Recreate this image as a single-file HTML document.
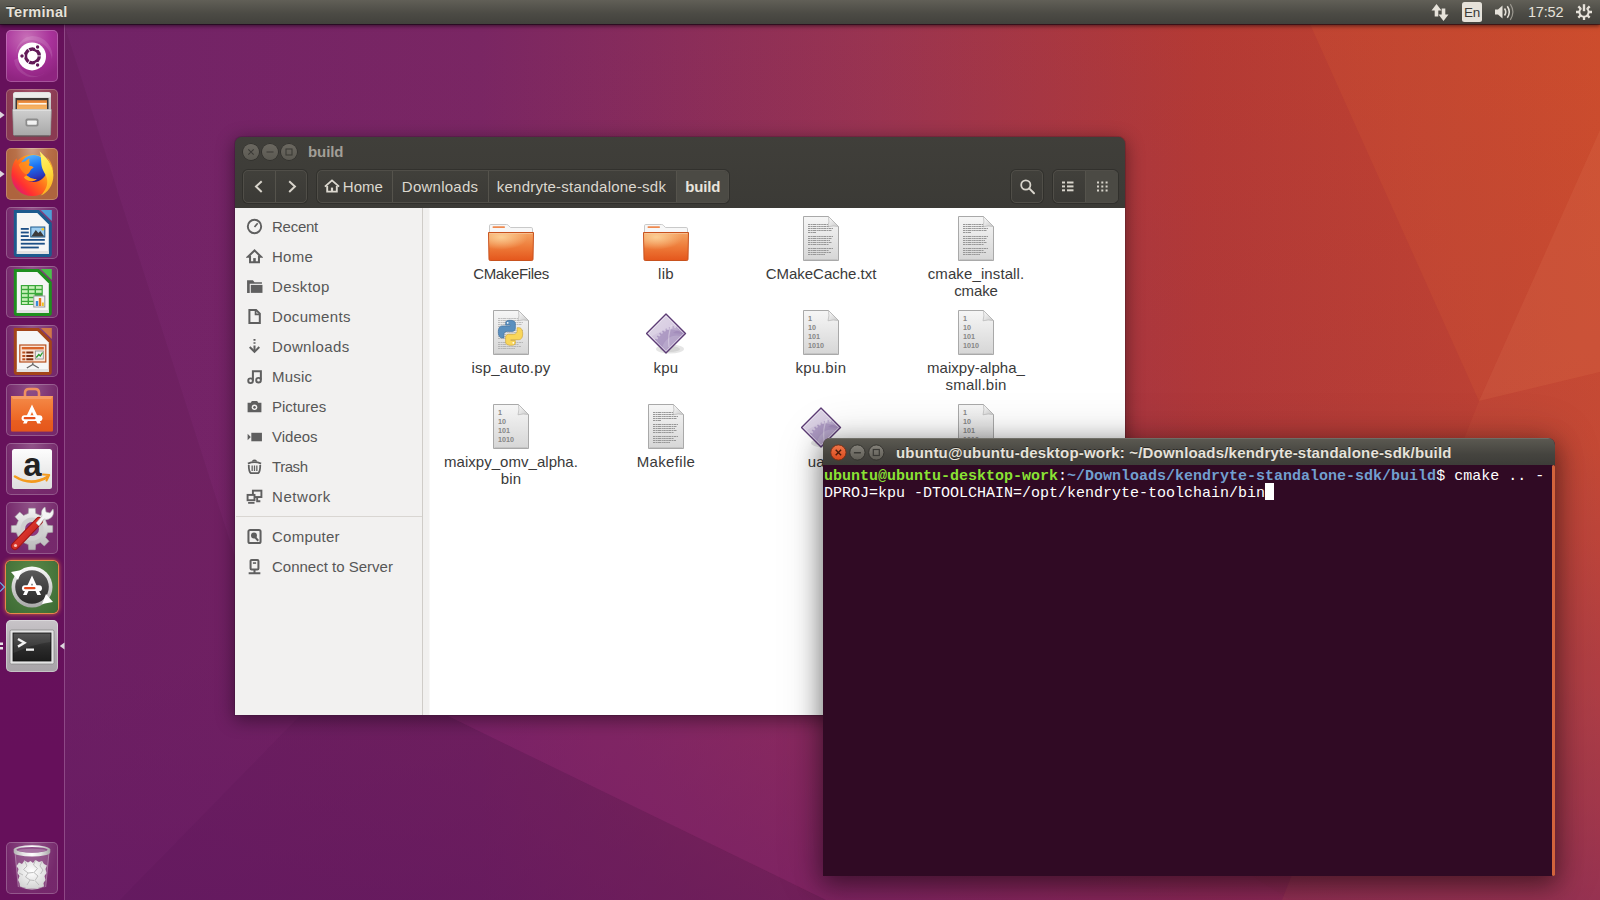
<!DOCTYPE html>
<html lang="en">
<head>
<meta charset="utf-8">
<title>Ubuntu Desktop</title>
<style>
*{box-sizing:border-box;margin:0;padding:0}
html,body{width:1600px;height:900px;overflow:hidden;background:#6e2266}
body{position:relative;font-family:"Liberation Sans","DejaVu Sans",sans-serif;color:#3c3c3c}
.abs{position:absolute}
#wall{position:absolute;left:0;top:0;width:1600px;height:900px}
/* top panel */
#panel{position:absolute;left:0;top:0;width:1600px;height:24px;background:linear-gradient(#615f57,#4c4b45 55%,#42413c);box-shadow:0 1px 0 rgba(20,5,18,.55),0 2px 4px rgba(0,0,0,.55);z-index:50}
#panel .title{position:absolute;left:6px;top:4px;font-weight:bold;font-size:14.5px;color:#e6e2da;letter-spacing:.28px;text-shadow:0 -1px 0 rgba(0,0,0,.4)}
#panel .clock{position:absolute;left:1528px;top:4px;font-size:14.5px;color:#e6e2da;letter-spacing:-.2px}
#panel .enbox{position:absolute;left:1462px;top:2px;width:20px;height:20px;border-radius:2.5px;background:#e6e2da;color:#3c3b37;font-size:13.5px;line-height:22px;text-align:center;letter-spacing:-.3px}
/* launcher */
#launcher{position:absolute;left:0;top:24px;width:65px;height:876px;background:rgba(100,14,88,.82);border-right:1px solid rgba(200,150,195,.42);z-index:40}
.tile{position:absolute;left:6px;width:52px;height:52px;border-radius:5px;overflow:hidden;box-shadow:inset 0 0 0 1px rgba(255,255,255,.22)}
/* nautilus */
#naut{position:absolute;left:235px;top:137px;width:890px;height:578px;border-radius:7px 7px 0 0;background:#3d3c38;box-shadow:0 4px 18px 1px rgba(0,0,0,.42),0 0 0 1px rgba(40,20,40,.2);z-index:10;overflow:hidden}
#naut .head{position:absolute;left:0;top:0;width:890px;height:71px;background:linear-gradient(#403f3a,#3b3a36)}
#naut .side{position:absolute;left:0;top:71px;width:188px;height:507px;background:#f2f1f0;border-right:1px solid #cfccc8}
#naut .content{position:absolute;left:188px;top:71px;width:702px;height:507px;background:linear-gradient(90deg,#f1f0ef 6px,#fff 7px)}

#naut .wb{position:absolute;top:6.5px;width:16px;height:16px;border-radius:50%;background:linear-gradient(#6b6860,#5b5952);box-shadow:0 0 0 .6px rgba(0,0,0,.35)}
#naut .ntitle{position:absolute;left:72px;top:6px;font-weight:bold;font-size:15px;color:#a29f97;letter-spacing:-.1px}
.hbtn{position:absolute;top:33px;height:33px;border:1px solid #504e48;border-radius:5px;background:linear-gradient(#41403b,#3b3a36);box-shadow:0 0 0 1px rgba(30,29,26,.35)}
.hbtn .div{position:absolute;top:0;width:1px;height:31px;background:#55534c}
.hbtn .act{position:absolute;top:0;height:31px;background:#4b4a44}
.pl{position:absolute;top:7px;margin-left:.8px;font-size:15px;color:#dcd8cf;white-space:nowrap}
.sb-item{position:absolute;left:36px;font-size:15px;color:#575757;white-space:nowrap;line-height:20px}
.sb-ic{position:absolute;left:9.5px;width:17px;height:17px;margin-top:-.5px}
.fl{position:absolute;width:150px;text-align:center;font-size:15px;line-height:17px;color:#3a3a3a;white-space:nowrap}
.fi{position:absolute}
#naut .head>*,#naut .side>*{margin-left:1px}
/* terminal */
#term{position:absolute;left:823px;top:438px;width:732px;height:438px;border-radius:7px 7px 0 0;background:#300a24;box-shadow:0 7px 24px 2px rgba(0,0,0,.45),0 2px 46px 6px rgba(0,0,0,.13);z-index:20;overflow:hidden}
#term .tbar{position:absolute;left:0;top:0;width:732px;height:27px;background:linear-gradient(#5c5a52,#45443f 60%,#3d3c38);box-shadow:inset 0 1px 0 rgba(255,255,255,.12)}
#term .ttl{position:absolute;left:73px;top:6px;font-weight:bold;font-size:15px;letter-spacing:.19px;color:#e6e2da;white-space:nowrap;text-shadow:0 -1px 0 rgba(0,0,0,.45)}
#term pre{position:absolute;left:1px;top:30px;font-family:"Liberation Mono","DejaVu Sans Mono",monospace;font-size:15px;line-height:17px;color:#fff;white-space:pre}
#term .g{color:#8ae234;font-weight:bold}
#term .b{color:#729fcf;font-weight:bold}
#term .cur{display:inline-block;width:9px;height:0;position:relative;vertical-align:baseline}
#term .cur::after{content:"";position:absolute;left:0;top:-14px;width:9px;height:17px;background:#fff}
#term .sb{position:absolute;right:0;top:27px;width:3px;height:411px;background:#d2633c;border-radius:1.5px}
</style>
</head>
<body>
<svg id="wall" viewBox="0 0 1600 900">
<defs>
<linearGradient id="wg" x1="0" y1="0" x2="1" y2="0">
<stop offset="0" stop-color="#6f2268"/>
<stop offset=".3" stop-color="#7a2663"/>
<stop offset=".55" stop-color="#9a3450"/>
<stop offset=".75" stop-color="#b43a34"/>
<stop offset="1" stop-color="#c8482c"/>
</linearGradient>
<linearGradient id="wv" x1="0" y1="0" x2="0" y2="1">
<stop offset="0" stop-color="#7a2070" stop-opacity="0"/>
<stop offset=".5" stop-color="#7a2070" stop-opacity=".1"/>
<stop offset="1" stop-color="#6a1a6a" stop-opacity=".6"/>
</linearGradient>
</defs>
<rect width="1600" height="900" fill="url(#wg)"/>
<rect width="1600" height="900" fill="url(#wv)"/>
<polygon points="64,24 236,560 236,716 300,716 120,900 64,900" fill="#1a0018" opacity=".06"/>
<polygon points="120,900 300,716 448,716 826,900" fill="#1a0018" opacity=".1"/>
<polygon points="448,716 1000,716 1290,900 826,900" fill="#a02868" opacity=".12"/>
<polygon points="1310,24 1600,24 1600,130 1479,401" fill="#ff8a3c" opacity=".09"/>
<polygon points="1600,130 1600,372 1479,401" fill="#ff9a5c" opacity=".16"/>
<polygon points="1479,401 1600,372 1600,900 1282,900" fill="#ff8a5c" opacity=".07"/>
</svg>

<svg width="0" height="0" style="position:absolute"><defs>
<linearGradient id="fo1" x1="0" y1="0" x2="0" y2="1"><stop offset="0" stop-color="#f4a463"/><stop offset=".5" stop-color="#ee7c3a"/><stop offset="1" stop-color="#e4561c"/></linearGradient>
<radialGradient id="fo2" cx=".28" cy=".2" r=".6"><stop offset="0" stop-color="#ffe0a8" stop-opacity=".75"/><stop offset="1" stop-color="#ffe0a8" stop-opacity="0"/></radialGradient>
<linearGradient id="dc1" x1="0" y1="0" x2="0" y2="1"><stop offset="0" stop-color="#f6f6f6"/><stop offset="1" stop-color="#d6d6d6"/></linearGradient>
<linearGradient id="dc2" x1="0" y1="0" x2="1" y2="1"><stop offset="0" stop-color="#ffffff"/><stop offset="1" stop-color="#c8c8c8"/></linearGradient>
<linearGradient id="ex1" x1="0" y1="0" x2="0" y2="1"><stop offset="0" stop-color="#d8cbe2"/><stop offset="1" stop-color="#a58cbc"/></linearGradient>
<g id="folder"><path d="M1.500 9 V1.800 Q1.500 .5 2.800 .5 H18.500 Q19.800 .5 20.600 1.500 L22.500 3.500 H43.200 Q44.500 3.500 44.500 4.800 V9Z" fill="#f7f7f7" stroke="#c9c9c9" stroke-width="1"/><rect x="4.500" y="2.300" width="12.500" height="1.700" rx=".8" fill="#ef8a50"/>
<path d="M.5 8.500 H45.500 L45 35.300 Q45 36.500 43.800 36.500 H2.200 Q1 36.500 1 35.300Z" fill="url(#fo1)" stroke="#c8521e" stroke-width="1"/><path d="M1 9 H45 L44.600 22 Q24 22 1.300 30Z" fill="url(#fo2)"/><path d="M1.500 9.500 H44.500" stroke="#f9c9a0" stroke-width="1" opacity=".7"/></g>
<g id="doc"><path d="M.5 .5 H25.500 L35.500 10.500 V44.500 H.5Z" fill="url(#dc1)" stroke="#a9a9a9" stroke-width="1"/><path d="M25.500 .5 Q26.500 6 25 10.800 Q30 9.300 35.500 10.500Z" fill="url(#dc2)" stroke="#b4b4b4" stroke-width=".7"/><path d="M1.500 43.500 H34.500" stroke="#c4c4c4" stroke-width="1"/></g>
<g id="doclines" stroke="#979797" stroke-width="1" stroke-dasharray="2.400 .5 1.700 .4 3.100 .5 1.300 .4"><path d="M5 8.5 H25 M5 10.5 H26 M5 12.5 H30 M5 14.5 H29 M5 16.5 H13 M5 20.5 H30 M5 22.5 H29 M5 24.5 H27 M5 26.5 H29 M5 28.5 H26 M5 32.5 H30 M5 34.5 H26 M5 36.5 H28 M5 38.5 H22"/></g>
<g id="exe"><defs><clipPath id="exc"><path d="M20 1.600 L38.900 20.500 L20 39.400 L1.100 20.500Z"/></clipPath><linearGradient id="ex3" x1="0" y1="0" x2="1" y2="1"><stop offset="0" stop-color="#ddd3e6"/><stop offset=".5" stop-color="#cfc2dc"/><stop offset="1" stop-color="#b9a7cc"/></linearGradient></defs>
<ellipse cx="24" cy="36" rx="14" ry="4.500" fill="#000" opacity=".10"/><ellipse cx="24" cy="36" rx="10" ry="3" fill="#000" opacity=".08"/>
<path d="M20 1 L39.500 20.500 L20 40 L.5 20.500Z" fill="url(#ex3)"/>
<g clip-path="url(#exc)"><path d="M30.0 15.1 L30.3 12.9 L31.7 12.9 L32.0 15.1 L33.5 15.2 L34.2 13.1 L35.5 13.3 L35.5 15.6 L37.0 15.9 L37.9 13.9 L39.3 14.3 L38.9 16.5 L40.3 17.1 L41.5 15.3 L42.8 15.9 L42.0 18.0 L43.4 18.8 L44.9 17.2 L46.0 18.0 L45.0 20.0 L46.1 21.0 L47.9 19.6 L48.9 20.6 L47.5 22.4 L48.5 23.5 L50.5 22.5 L51.3 23.6 L49.7 25.1 L50.5 26.5 L52.6 25.7 L53.2 27.0 L51.4 28.2 L52.0 29.6 L54.2 29.2 L54.6 30.6 L52.6 31.5 L52.9 33.0 L55.2 33.0 L55.4 34.3 L53.3 35.0 L53.4 36.5 L55.6 36.8 L55.6 38.2 L53.4 38.5 L53.3 40.0 L55.4 40.7 L55.2 42.0 L52.9 42.0 L52.6 43.5 L54.6 44.4 L54.2 45.8 L52.0 45.4 L51.4 46.8 L53.2 48.0 L52.6 49.3 L50.5 48.5 L49.7 49.9 L51.3 51.4 L50.5 52.5 L48.5 51.5 L47.5 52.6 L48.9 54.4 L47.9 55.4 L46.1 54.0 L45.0 55.0 L46.0 57.0 L44.9 57.8 L43.4 56.2 L42.0 57.0 L42.8 59.1 L41.5 59.7 L40.3 57.9 L38.9 58.5 L39.3 60.7 L37.9 61.1 L37.0 59.1 L35.5 59.4 L35.5 61.7 L34.2 61.9 L33.5 59.8 L32.0 59.9 L31.7 62.1 L30.3 62.1 L30.0 59.9 L28.5 59.8 L27.8 61.9 L26.5 61.7 L26.5 59.4 L25.0 59.1 L24.1 61.1 L22.7 60.7 L23.1 58.5 L21.7 57.9 L20.5 59.7 L19.2 59.1 L20.0 57.0 L18.6 56.2 L17.1 57.8 L16.0 57.0 L17.0 55.0 L15.9 54.0 L14.1 55.4 L13.1 54.4 L14.5 52.6 L13.5 51.5 L11.5 52.5 L10.7 51.4 L12.3 49.9 L11.5 48.5 L9.4 49.3 L8.8 48.0 L10.6 46.8 L10.0 45.4 L7.8 45.8 L7.4 44.4 L9.4 43.5 L9.1 42.0 L6.8 42.0 L6.6 40.7 L8.7 40.0 L8.6 38.5 L6.4 38.2 L6.4 36.8 L8.6 36.5 L8.7 35.0 L6.6 34.3 L6.8 33.0 L9.1 33.0 L9.4 31.5 L7.4 30.6 L7.8 29.2 L10.0 29.6 L10.6 28.2 L8.8 27.0 L9.4 25.7 L11.5 26.5 L12.3 25.1 L10.7 23.6 L11.5 22.5 L13.5 23.5 L14.5 22.4 L13.1 20.6 L14.1 19.6 L15.9 21.0 L17.0 20.0 L16.0 18.0 L17.1 17.2 L18.6 18.8 L20.0 18.0 L19.2 15.9 L20.5 15.3 L21.7 17.1 L23.1 16.5 L22.7 14.3 L24.1 13.9 L25.0 15.9 L26.5 15.6 L26.5 13.3 L27.8 13.1 L28.5 15.2Z" fill="#9a83b4" opacity=".62"/><circle cx="31" cy="37.500" r="15" fill="#c4b5d4" opacity=".5"/>
<path d="M25.500 12 Q21.500 22 23 34" stroke="#e8e0ee" stroke-width="1.300" fill="none" opacity=".5"/>
<path d="M27 20 L38 21 L33 16Z" fill="#9a83b4" opacity=".55"/>
<path d="M20 2 L38 20 Q27 15 20 17 Q10 20 5 24 L2 20.500Z" fill="#fff" opacity=".18"/></g>
<path d="M20 2.700 L37.800 20.500 L20 38.300 L2.200 20.500Z" fill="none" stroke="#fff" stroke-opacity=".55" stroke-width="1"/>
<path d="M20 1 L39.500 20.500 L20 40 L.5 20.500Z" fill="none" stroke="#5c3b74" stroke-width="1.300" stroke-linejoin="round"/></g>
<g id="py"><path d="M12.500 .8 C8 .8 8.200 2.800 8.200 2.800 V5.600 H12.700 V6.400 H4.800 C4.800 6.400 .8 6 .8 12.300 C.8 18.600 4.300 18.400 4.300 18.400 H6.400 V15.400 C6.400 15.400 6.300 11.900 9.800 11.900 H14.600 C14.600 11.900 17.900 12 17.900 8.700 V4.200 C17.900 4.200 18.400 .8 12.500 .8Z" fill="#5a8fbe" stroke="#3a6a98" stroke-width=".6"/><circle cx="10.200" cy="3.300" r=".9" fill="#fff"/>
<path d="M13.500 25.800 C18 25.800 17.800 23.800 17.800 23.800 V21 H13.300 V20.200 H21.200 C21.200 20.200 25.200 20.600 25.200 14.300 C25.200 8 21.700 8.200 21.700 8.200 H19.600 V11.200 C19.600 11.200 19.700 14.700 16.200 14.700 H11.400 C11.400 14.700 8.100 14.600 8.100 17.900 V22.400 C8.100 22.400 7.600 25.800 13.500 25.800Z" fill="#f9d65a" stroke="#c9a030" stroke-width=".6"/><circle cx="15.800" cy="23.300" r=".9" fill="#fff"/></g>
</defs></svg>
<div id="panel"><span class="title">Terminal</span>
<svg class="abs" style="left:1428px;top:0" width="24" height="24" viewBox="0 0 24 24"><g fill="#e6e2da"><path d="M8.5 4 L13.5 10.5 H10.3 V16.5 H6.7 V10.5 H3.5 Z"/><path d="M15.5 21 L10.5 14.5 H13.7 V8.5 H17.3 V14.5 H20.5 Z"/></g></svg>
<span class="enbox">En</span>
<svg class="abs" style="left:1493px;top:0" width="24" height="24" viewBox="0 0 24 24"><path d="M2 9.5 H5 L9.5 5.5 V18.5 L5 14.5 H2 Z" fill="#e6e2da"/><path d="M11.5 8.5 Q14 12 11.5 15.5" stroke="#e6e2da" stroke-width="1.6" fill="none"/><path d="M14.3 6.3 Q18.3 12 14.3 17.7" stroke="#e6e2da" stroke-width="1.5" fill="none"/><path d="M17.3 4.2 Q22.5 12 17.3 19.8" stroke="#9a978f" stroke-width="1.2" fill="none"/></svg>
<span class="clock">17:52</span>
<svg class="abs" style="left:1574px;top:2px" width="20" height="20" viewBox="0 0 20 20"><g fill="none" stroke="#e6e2da"><path d="M12.57 6.19 A4.6 4.6 0 1 1 7.43 6.19" stroke-width="1.9"/><path d="M13.54 6.46 L15.66 4.34 M15.00 10.00 L18.00 10.00 M13.54 13.54 L15.66 15.66 M10.00 15.00 L10.00 18.00 M6.46 13.54 L4.34 15.66 M5.00 10.00 L2.00 10.00 M6.46 6.46 L4.34 4.34 " stroke-width="2.3"/><path d="M10 2.200 V9.200" stroke-width="2.400"/></g></svg>
</div>
<div id="launcher">
<div class="tile" style="top:6px;background:radial-gradient(circle at 40% 15%,#c870b8,#a8329a 45%,#8f2480 80%);"><svg width="52" height="52" viewBox="0 0 52 52"><path d="M26 6 A20 20 0 0 1 46 30 A22 22 0 0 0 26 10 A16 16 0 0 0 10 24 A18 18 0 0 1 26 6Z" fill="#fff" opacity=".12"/>
<path d="M8 30 A19 19 0 0 0 40 42 A17 17 0 0 1 12 28Z" fill="#fff" opacity=".10"/>
<circle cx="26" cy="26.4" r="14" fill="#fff"/>
<circle cx="26.4" cy="25.9" r="6.9" fill="none" stroke="#621a58" stroke-width="3.3"/><g stroke="#fff" stroke-width=".9"><path d="M30.90 25.90 L35.90 25.90"/><path d="M24.15 29.80 L21.65 34.13"/><path d="M24.15 22.00 L21.65 17.67"/></g><g fill="#621a58" stroke="#fff" stroke-width="1.1"><circle cx="16.00" cy="25.90" r="2.3"/><circle cx="31.60" cy="16.89" r="2.3"/><circle cx="31.60" cy="34.91" r="2.3"/></g></svg></div>
<div class="tile" style="top:65px;background:radial-gradient(ellipse at 50% 0%,#a05068,#8a3a52 70%);"><svg width="52" height="52" viewBox="0 0 52 52"><defs><linearGradient id="fc1" x1="0" y1="0" x2="0" y2="1"><stop offset="0" stop-color="#d8d8d8"/><stop offset="1" stop-color="#9a9a9a"/></linearGradient><linearGradient id="fc2" x1="0" y1="0" x2="0" y2="1"><stop offset="0" stop-color="#cfcfcf"/><stop offset="1" stop-color="#a8a8a8"/></linearGradient></defs>
<path d="M7 5.500 Q7 3 9.500 3 H42.500 Q45 3 45 5.500 V46 H7Z" fill="url(#fc1)"/>
<rect x="7.500" y="3.500" width="37" height="5" rx="1.500" fill="#ececec"/>
<rect x="9.500" y="9" width="33" height="12" fill="#3c3836"/>
<rect x="11" y="11.500" width="30" height="9.500" fill="#f0a050"/><rect x="11" y="11.500" width="30" height="2" fill="#e8853a"/><rect x="12.500" y="14" width="28" height="1.600" fill="#fff6e8"/><rect x="11" y="16.500" width="30" height="4.500" fill="#f5b060"/>
<path d="M6.500 20.500 H45.500 L44.500 45.500 Q44.500 46.500 43.500 46.500 H8.500 Q7.500 46.500 7.500 45.500Z" fill="url(#fc2)" stroke="#8a8a8a" stroke-width=".6"/>
<path d="M7 21 H45" stroke="#eeeeee" stroke-width="1.200"/>
<rect x="19.500" y="29.500" width="13" height="8" rx="1.800" fill="#8c8c8c"/><rect x="21.200" y="31.500" width="9.600" height="4.200" rx=".8" fill="#f2f2f2"/>
<rect x="8.500" y="46.300" width="35" height="1.700" fill="#5a5a5a" opacity=".6"/></svg></div>
<div class="tile" style="top:124px;background:radial-gradient(ellipse at 50% -5%,#d0a48c,#b87048 45%,#ae643e 75%);"><svg width="52" height="52" viewBox="0 0 52 52"><defs><linearGradient id="ffo" gradientUnits="userSpaceOnUse" x1="9.5" y1="44" x2="42.8" y2="12.7"><stop offset="0" stop-color="#d8187e"/><stop offset=".22" stop-color="#ff2f32"/><stop offset=".5" stop-color="#ff6a1c"/><stop offset=".75" stop-color="#ffa81e"/><stop offset="1" stop-color="#ffd83a"/></linearGradient>
<linearGradient id="ffb" x1=".3" y1="0" x2=".6" y2="1"><stop offset="0" stop-color="#58b6ff"/><stop offset=".45" stop-color="#1a72f2"/><stop offset=".8" stop-color="#2a3cc0"/><stop offset="1" stop-color="#2e1a88"/></linearGradient>
<linearGradient id="ffh" x1="0" y1=".2" x2="1" y2=".8"><stop offset="0" stop-color="#ff4a2a"/><stop offset=".6" stop-color="#ff8a1c"/><stop offset="1" stop-color="#ffa41e"/></linearGradient>
<linearGradient id="fft" x1=".4" y1="0" x2=".6" y2="1"><stop offset="0" stop-color="#fff36a"/><stop offset=".45" stop-color="#ffe040"/><stop offset="1" stop-color="#ffa81c"/></linearGradient></defs>
<circle cx="26.200" cy="27.300" r="20.800" fill="url(#ffo)"/>
<circle cx="27.500" cy="20.500" r="13.600" fill="url(#ffb)"/>
<path d="M10.400 10.200 L12.600 16.400 C14.500 14.800 17 13.800 19.500 13.600 C20.500 12.200 22 11 23.500 10.600 C23 12.200 23 13.600 23.600 14.800 C23 15.800 22.600 16.800 22.800 17.800 C24.800 17.500 26.600 18.300 27.600 19.800 C26 20.400 24.600 21.400 23.900 23.200 C23.300 24.800 22 26 20.500 26.600 C22 29.500 26 31.500 30.800 31.200 C27.500 34 22 34.500 18 32 C12 30 7 26 5.600 24 C6 18 7.500 13.500 10.400 10.200Z" fill="url(#ffo)"/><path d="M12.600 16.400 C14.500 14.800 17 13.800 19.500 13.600 C20.500 12.200 22 11 23.500 10.600 C23 12.200 23 13.600 23.600 14.800 C23 15.800 22.600 16.800 22.800 17.800 C24.800 17.500 26.600 18.300 27.600 19.800 C26 20.400 24.600 21.400 23.900 23.200 C23.300 24.800 22 26 20.500 26.600 C17 25 14 21 12.600 16.400Z" fill="#ff9a1e" opacity=".55"/>
<path d="M18 29.500 C20.500 33.500 27 34 30.800 31.200 C27.600 31 24.600 30.600 22.400 28.600 C20.800 27.300 19 27.600 18 29.500Z" fill="#ffa51e"/>
<path d="M33.600 3.200 C38.500 8.500 47.200 14.500 47.400 27 C47.500 37.500 41.500 45 34.500 47.600 C39.800 42.500 42.300 36.500 40.900 30.500 C39.800 25.500 36 22.500 35.400 16.500 C35 11.500 35.200 7.500 33.600 3.200Z" fill="url(#fft)"/>
<path d="M40.500 8.500 C44 12 47 17 47.400 24 C45.500 18 43 13.500 40.500 8.500Z" fill="#ffb02a" opacity=".8"/></svg></div>
<div class="tile" style="top:183px;background:radial-gradient(ellipse at 50% 0%,rgba(255,255,255,.28),rgba(255,255,255,.10) 70%);"><svg width="52" height="52" viewBox="0 0 52 52"><g transform="translate(.8 0)"><path d="M7 3 H32 L45 16 V47 Q45 50 42 50 H10 Q7 50 7 47Z" fill="#1d5a8e"/>
<path d="M34 3 H45 V14Z" fill="#4f9fd6"/>
<path d="M10 6 H30.5 L42 17.5 V47 H10Z" fill="#f6f6f6"/><path d="M10 44 H42 V47 H10Z" fill="#e2e2e2"/><g fill="#1d4f86"><rect x="14" y="21" width="8" height="1.8"/><rect x="14" y="24.6" width="8" height="1.8"/><rect x="14" y="28.2" width="8" height="1.8"/><rect x="14" y="32" width="24" height="1.8"/><rect x="14" y="35.8" width="24" height="1.8"/><rect x="14" y="39.6" width="18" height="1.8"/></g>
<rect x="24" y="20" width="14" height="10" fill="#9ccdf0" stroke="#1d5a8e" stroke-width="1"/><path d="M24.5 29.5 L29 23 L31.5 26 L33.5 24 L37.5 29.5Z" fill="#3c3c3c"/><circle cx="36" cy="22.3" r="1.3" fill="#f6c820"/></g></svg></div>
<div class="tile" style="top:242px;background:radial-gradient(ellipse at 50% 0%,rgba(255,255,255,.28),rgba(255,255,255,.10) 70%);"><svg width="52" height="52" viewBox="0 0 52 52"><g transform="translate(.8 0)"><path d="M7 3 H32 L45 16 V47 Q45 50 42 50 H10 Q7 50 7 47Z" fill="#1f8f1f"/>
<path d="M34 3 H45 V14Z" fill="#4cc04c"/>
<path d="M10 6 H30.5 L42 17.5 V47 H10Z" fill="#f6f6f6"/><path d="M10 44 H42 V47 H10Z" fill="#e2e2e2"/><g fill="#3aa83a"><rect x="14" y="19" width="22" height="20"/></g><g fill="#c8f0b8"><rect x="15.2" y="20.2" width="5.6" height="2.6"/><rect x="22.2" y="20.2" width="5.6" height="2.6"/><rect x="29.2" y="20.2" width="5.6" height="2.6"/><rect x="15.2" y="24.2" width="5.6" height="2.6"/><rect x="22.2" y="24.2" width="5.6" height="2.6"/><rect x="29.2" y="24.2" width="5.6" height="2.6"/><rect x="15.2" y="28.2" width="5.6" height="2.6"/><rect x="22.2" y="28.2" width="5.6" height="2.6"/><rect x="15.2" y="32.2" width="5.6" height="2.6"/><rect x="22.2" y="32.2" width="5.6" height="2.6"/><rect x="15.2" y="36" width="5.6" height="2"/><rect x="22.2" y="36" width="5.6" height="2"/></g>
<rect x="27" y="30" width="11" height="11" fill="#f4f4f4" stroke="#9a9a9a" stroke-width="1"/><rect x="29" y="35" width="2.4" height="5" fill="#3a8ad8"/><rect x="32" y="32" width="2.4" height="8" fill="#e87820"/><rect x="35" y="36.5" width="2" height="3.5" fill="#f0c020"/></g></svg></div>
<div class="tile" style="top:301px;background:radial-gradient(ellipse at 50% 0%,rgba(255,255,255,.28),rgba(255,255,255,.10) 70%);"><svg width="52" height="52" viewBox="0 0 52 52"><g transform="translate(.8 0)"><path d="M7 3 H32 L45 16 V47 Q45 50 42 50 H10 Q7 50 7 47Z" fill="#a3451a"/>
<path d="M34 3 H45 V14Z" fill="#d07848"/>
<path d="M10 6 H30.5 L42 17.5 V47 H10Z" fill="#f6f6f6"/><path d="M10 44 H42 V47 H10Z" fill="#e2e2e2"/><rect x="13" y="20" width="26" height="17" fill="#fbe4d6" stroke="#b8501e" stroke-width="1.2"/><rect x="15" y="22" width="22" height="2.4" fill="#d8642a"/><g fill="#b8501e"><rect x="15.5" y="26.5" width="3" height="2"/><rect x="15.5" y="30" width="3" height="2"/><rect x="15.5" y="33.3" width="3" height="2"/></g><g fill="#7a2c10"><rect x="19.5" y="26.5" width="7" height="2"/><rect x="19.5" y="30" width="7" height="2"/><rect x="19.5" y="33.3" width="7" height="2"/></g><rect x="28.5" y="26" width="8" height="8" fill="#eee" stroke="#8a8a8a" stroke-width=".8"/><path d="M29.5 32.5 L32 29.5 L33.5 31 L35.8 27.5" stroke="#2a9a2a" stroke-width="1.3" fill="none"/><path d="M26 37.5 V40 M26 39.5 L20 43 M26 39.5 L32 43" stroke="#6a6a6a" stroke-width="1.4" fill="none"/></g></svg></div>
<div class="tile" style="top:360px;background:radial-gradient(ellipse at 50% 0%,rgba(255,255,255,.28),rgba(255,255,255,.10) 70%);"><svg width="52" height="52" viewBox="0 0 52 52"><defs><linearGradient id="sc1" x1="0" y1="0" x2="0" y2="1"><stop offset="0" stop-color="#f48a48"/><stop offset=".6" stop-color="#ee6a28"/><stop offset="1" stop-color="#e85a1c"/></linearGradient></defs>
<path d="M19 16 V9 Q19 5 23 5 H29 Q33 5 33 9 V16" fill="none" stroke="#f09060" stroke-width="2.6"/>
<path d="M5 12 H47 V46 Q47 47.5 45.5 47.5 H6.500 Q5 47.500 5 46Z" fill="url(#sc1)"/><path d="M5 12 H47 L45 15 H7Z" fill="#f8a878" opacity=".6"/><rect x="5" y="36" width="42" height="11.5" fill="#e0501a" opacity=".35"/>
<path d="M26 20.500 L35 39.600 H31.300 L26 28 L20.700 39.600 H17Z" fill="#fff"/><rect x="15.600" y="31.300" width="20.800" height="5.800" rx="2.900" fill="#fff"/><rect x="17.600" y="33.100" width="12" height="2.200" rx="1.100" fill="#e8501c"/></svg></div>
<div class="tile" style="top:419px;background:radial-gradient(ellipse at 50% 0%,rgba(255,255,255,.28),rgba(255,255,255,.10) 70%);"><svg width="52" height="52" viewBox="0 0 52 52"><defs><linearGradient id="am1" x1="0" y1="0" x2="0" y2="1"><stop offset="0" stop-color="#fdfdfd"/><stop offset="1" stop-color="#dedede"/></linearGradient></defs>
<rect x="6" y="6" width="40" height="40" rx="2.500" fill="url(#am1)"/>
<text x="26.500" y="33" text-anchor="middle" font-family="Liberation Sans,sans-serif" font-weight="bold" font-size="33" fill="#222">a</text>
<path d="M9 33.500 Q25 43.500 41.500 34" stroke="#f39a1e" stroke-width="2.600" fill="none" stroke-linecap="round"/><path d="M37 31.500 L43.200 32 L40.500 37.500" stroke="#f39a1e" stroke-width="2" fill="none" stroke-linejoin="round" stroke-linecap="round"/></svg></div>
<div class="tile" style="top:478px;background:radial-gradient(ellipse at 50% 0%,rgba(255,255,255,.28),rgba(255,255,255,.10) 70%);"><svg width="52" height="52" viewBox="0 0 52 52"><defs><linearGradient id="gr1" x1="0" y1="0" x2="0" y2="1"><stop offset="0" stop-color="#f2f2f2"/><stop offset="1" stop-color="#b8b8b8"/></linearGradient><linearGradient id="wr1" x1="0" y1="0" x2="1" y2="1"><stop offset="0" stop-color="#f04838"/><stop offset="1" stop-color="#b81818"/></linearGradient></defs>
<path d="M22.3 11.4 L22.7 6.3 L29.3 6.3 L29.7 11.4 L34.4 13.4 L38.3 10.0 L43.0 14.7 L39.6 18.6 L41.6 23.3 L46.7 23.7 L46.7 30.3 L41.6 30.7 L39.6 35.4 L43.0 39.3 L38.3 44.0 L34.4 40.6 L29.7 42.6 L29.3 47.7 L22.7 47.7 L22.3 42.6 L17.6 40.6 L13.7 44.0 L9.0 39.3 L12.4 35.4 L10.4 30.7 L5.3 30.3 L5.3 23.7 L10.4 23.3 L12.4 18.6 L9.0 14.7 L13.7 10.0 L17.6 13.4Z" fill="url(#gr1)" stroke="#a8a8a8" stroke-width=".6"/><circle cx="26" cy="27" r="11.500" fill="#cfcfcf"/><circle cx="26" cy="27" r="7" fill="#8c3a80"/>
<path d="M9 44 L33 19" stroke="#a01414" stroke-width="8" stroke-linecap="round"/><path d="M9 44 L33 19" stroke="url(#wr1)" stroke-width="6" stroke-linecap="round"/><circle cx="9.500" cy="43.500" r="1.600" fill="#f8c0b8"/>
<path d="M30 21 L36 14 Q34 8 39 5 L40 10 L44 11 L47 7 Q49 14 43 17 Q40 18 38 17 L33 24Z" fill="#f4f4f4" stroke="#b0b0b0" stroke-width=".6"/></svg></div>
<div class="tile" style="top:537px;background:radial-gradient(ellipse at 50% 30%,#5a8a48,#45733a 70%,#3c6a32);box-shadow:0 0 0 1px #e8884a,0 0 4px 1px rgba(240,130,60,.8);"><svg width="52" height="52" viewBox="0 0 52 52"><defs><linearGradient id="up1" x1="0" y1="0" x2="0" y2="1"><stop offset="0" stop-color="#5a5a5a"/><stop offset="1" stop-color="#2a2a2a"/></linearGradient><linearGradient id="up2" x1="0" y1="0" x2="0" y2="1"><stop offset="0" stop-color="#fafafa"/><stop offset="1" stop-color="#a8a8a8"/></linearGradient></defs>
<circle cx="26" cy="26" r="20.500" fill="url(#up2)"/><circle cx="26" cy="26" r="16.800" fill="url(#up1)"/>
<path d="M5 11 L16 9 L12 19Z" fill="#fff"/><path d="M47 41 L36 43 L40 33Z" fill="#fff"/>
<path d="M26 14.500 L35 34 H31.300 L26 22.200 L20.700 34 H17Z" fill="#fff"/><rect x="16" y="24.300" width="20" height="5.800" rx="2.900" fill="#fff"/><rect x="18" y="26.100" width="11.500" height="2.200" rx="1.100" fill="#e8481c"/></svg></div>
<div class="tile" style="top:596px;background:linear-gradient(#c8c4c8,#b0acb0 60%,#a8a4a8);box-shadow:inset 0 0 0 1px rgba(255,255,255,.35);"><svg width="52" height="52" viewBox="0 0 52 52"><defs><linearGradient id="tm1" x1="0" y1="0" x2="0" y2="1"><stop offset="0" stop-color="#4a4a4a"/><stop offset=".5" stop-color="#2c2c2c"/><stop offset="1" stop-color="#1c1c1c"/></linearGradient></defs>
<rect x="4" y="10" width="44" height="34" rx="1.500" fill="#e4e4e4" stroke="#8a8a8a" stroke-width=".8"/><rect x="7" y="13" width="38" height="28" fill="url(#tm1)" stroke="#111" stroke-width=".8"/>
<path d="M7.500 13.500 H44.500 V22 Q28 24 7.500 33Z" fill="#fff" opacity=".07"/>
<path d="M12 19 L18.500 22.800 L12 26.600" stroke="#f2f2f2" stroke-width="2.400" fill="none"/><rect x="20" y="28.500" width="8" height="2.300" fill="#f2f2f2"/></svg></div>
<div class="tile" style="top:818px;background:radial-gradient(ellipse at 50% 0%,rgba(255,255,255,.28),rgba(255,255,255,.10) 70%);"><svg width="52" height="52" viewBox="0 0 52 52"><defs><linearGradient id="tr1" x1="0" y1="0" x2="1" y2="0"><stop offset="0" stop-color="#b4b4b4"/><stop offset=".25" stop-color="#e4e4e4"/><stop offset=".5" stop-color="#ffffff"/><stop offset=".75" stop-color="#e0e0e0"/><stop offset="1" stop-color="#a8a8a8"/></linearGradient>
<radialGradient id="tr2" cx=".5" cy=".4" r=".6"><stop offset="0" stop-color="#ffffff"/><stop offset="1" stop-color="#d4d4d4"/></radialGradient></defs>
<path d="M8.500 10 L12 45 Q26 50 40 45 L43.500 10Z" fill="#fff" opacity=".13"/>
<path d="M9 10 L12.300 45 M43 10 L39.700 45" stroke="#fff" stroke-opacity=".35" stroke-width=".8" fill="none"/>
<path d="M10.500 24 L13 20.500 L16 22 L18.500 18.500 L22 20.500 L24.500 19 L27 21 L29.500 18 L33 20 L36 19 L38 22 L41 23.500 L39.500 27 L40.500 31 L38.500 34 L39.500 38 L37.500 41 L38 44.500 Q26 48.500 14 44.500 L13.500 41 L12 38 L13.500 34 L11.500 31 L12.500 27Z" fill="url(#tr2)"/>
<path d="M18.500 18.500 L21 24 L17.500 27.500 L22 31 L19.500 35 L24 38 L21 43 M29.500 18 L27.500 23 L31.500 26.500 L28 30.500 L32 34 L29 38.500 L33 43 M36 19 L34 24 L37 28 L34.500 32 M13 31 L17 33 M24 38 L28 38.500 M22 31 L27.500 30.500" stroke="#bdbdbd" stroke-width="1" fill="none"/>
<path d="M14 44.500 Q26 48.500 38 44.500 Q26 50.500 14 44.500Z" fill="#cfcfcf"/>
<path d="M7.700 7.500 V10.300 A18.300 4.300 0 0 0 44.300 10.300 V7.500Z" fill="url(#tr1)"/>
<ellipse cx="26" cy="7.500" rx="18.300" ry="4.300" fill="url(#tr1)"/><ellipse cx="26" cy="7.800" rx="15.600" ry="2.900" fill="#8e5089"/><ellipse cx="26" cy="8.600" rx="14" ry="1.800" fill="#b48ab0" opacity=".6"/></svg></div>
<svg class="abs" style="left:0;top:85px" width="6" height="12"><path d="M0 2.600 L4.600 6 L0 9.400Z" fill="#dcd6dc"/></svg>
<svg class="abs" style="left:0;top:144px" width="6" height="12"><path d="M0 2.600 L4.600 6 L0 9.400Z" fill="#dcd6dc"/></svg>
<svg class="abs" style="left:0;top:557px" width="6" height="12"><path d="M0 1.500 L4.500 6 L0 10.500" fill="none" stroke="#6ab0e8" stroke-width="1.200"/></svg>
<svg class="abs" style="left:0;top:614px" width="6" height="16"><rect x="0" y="4.500" width="3" height="2.500" fill="#e8e4e8"/><rect x="0" y="9" width="3" height="2.500" fill="#e8e4e8"/></svg>
<svg class="abs" style="left:59px;top:616px" width="6" height="12"><path d="M5.500 2.400 L.8 6 L5.500 9.600Z" fill="#dcd6dc"/></svg>
</div>

<div id="naut">
<div class="head">
<div class="wb" style="left:6.5px"><svg width="16" height="16"><path d="M5.300 5.300 L10.700 10.700 M10.700 5.300 L5.300 10.700" stroke="#3a3935" stroke-width="1.050"/></svg></div>
<div class="wb" style="left:25.500px"><svg width="16" height="16"><path d="M4.500 8 H11.500" stroke="#3a3935" stroke-width="1.050"/></svg></div>
<div class="wb" style="left:44.500px"><svg width="16" height="16"><rect x="5" y="5" width="6" height="6" fill="none" stroke="#3a3935" stroke-width="1.050"/></svg></div>
<div class="ntitle">build</div>
<div class="hbtn" style="left:7px;width:64px"><div class="div" style="left:31px"></div>
<svg class="abs" style="left:0;top:0" width="63" height="31"><path d="M17.700 10.300 L12 15.600 L17.700 20.900" stroke="#d8d4cb" stroke-width="2" fill="none"/><path d="M45.200 10.300 L50.900 15.600 L45.200 20.900" stroke="#d8d4cb" stroke-width="2" fill="none"/></svg></div>
<div class="hbtn" style="left:81px;width:412px">
<div class="act" style="left:359px;width:51px;border-radius:0 4px 4px 0"></div>
<div class="div" style="left:74px"></div><div class="div" style="left:170px"></div><div class="div" style="left:358px"></div>
<svg class="abs" style="left:6px;top:7.500px" width="16" height="14" viewBox="0 0 16 14"><g fill="none" stroke="#dcd8cf" stroke-width="1.900"><path d="M.9 7.600 L8 1.400 L15.100 7.600"/><path d="M3.200 7 V12.600 H12.800 V7"/></g><rect x="6.900" y="8.600" width="2.200" height="4" fill="#dcd8cf"/></svg>
<span class="pl" style="left:24px">Home</span>
<span class="pl" style="left:83px;letter-spacing:.25px">Downloads</span>
<span class="pl" style="left:178px;letter-spacing:.22px">kendryte-standalone-sdk</span>
<span class="pl" style="left:366.5px;font-weight:bold;color:#e8e4dc;letter-spacing:-.2px">build</span>
</div>
<div class="hbtn" style="left:775px;width:32px"><svg class="abs" style="left:0;top:0" width="31" height="31"><circle cx="13.800" cy="14" r="4.600" fill="none" stroke="#d8d4cb" stroke-width="1.800"/><path d="M17.200 17.400 L22 22.200" stroke="#d8d4cb" stroke-width="2" stroke-linecap="round"/></svg></div>
<div class="hbtn" style="left:817px;width:65px"><div class="act" style="left:32px;width:32px;border-radius:0 4px 4px 0"></div><div class="div" style="left:31px"></div>
<svg class="abs" style="left:0;top:0" width="64" height="31"><g fill="#d8d4cb"><rect x="8" y="10.500" width="3" height="2"/><rect x="13" y="10.500" width="6.500" height="2"/><rect x="8" y="14.400" width="3" height="2"/><rect x="13" y="14.400" width="6.500" height="2"/><rect x="8" y="18.300" width="3" height="2"/><rect x="13" y="18.300" width="6.500" height="2"/>
<rect x="43" y="10.500" width="2" height="2"/><rect x="47.300" y="10.500" width="2" height="2"/><rect x="51.600" y="10.500" width="2" height="2"/><rect x="43" y="14.500" width="2" height="2"/><rect x="47.300" y="14.500" width="2" height="2"/><rect x="51.600" y="14.500" width="2" height="2"/><rect x="43" y="18.500" width="2" height="2"/><rect x="47.300" y="18.500" width="2" height="2"/><rect x="51.600" y="18.500" width="2" height="2"/></g></svg></div>
</div>
<div class="side">
<svg class="sb-ic" style="top:10px" viewBox="0 0 16 16"><circle cx="8" cy="8" r="6.300" fill="none" stroke="#5f5f5f" stroke-width="1.800"/><path d="M8 8.500 L11 5" stroke="#5f5f5f" stroke-width="1.600" fill="none"/></svg><span class="sb-item" style="top:9px;letter-spacing:-0.25px">Recent</span>
<svg class="sb-ic" style="top:40px" viewBox="0 0 16 16"><path d="M8 2.300 L1.800 8.300 H3.800 V13.500 H12.200 V8.300 H14.200 Z" fill="none" stroke="#5f5f5f" stroke-width="1.900"/><rect x="6.800" y="9.500" width="2.400" height="4" fill="#5f5f5f"/></svg><span class="sb-item" style="top:39px;letter-spacing:0.28px">Home</span>
<svg class="sb-ic" style="top:70px" viewBox="0 0 16 16"><path d="M1 2 H6.500 L8 4 H15 V5.500 H3.500 V14 H1Z" fill="#5f5f5f"/><rect x="4.500" y="6.500" width="11" height="7.500" fill="#5f5f5f"/></svg><span class="sb-item" style="top:69px;letter-spacing:0.38px">Desktop</span>
<svg class="sb-ic" style="top:100px" viewBox="0 0 16 16"><path d="M3.200 1.800 H9.500 L13 5.300 V14.200 H3.200Z" fill="none" stroke="#5f5f5f" stroke-width="1.900"/><path d="M9 2 V6 H13" fill="none" stroke="#5f5f5f" stroke-width="1.600"/></svg><span class="sb-item" style="top:99px;letter-spacing:0.32px">Documents</span>
<svg class="sb-ic" style="top:130px" viewBox="0 0 16 16"><path d="M8 1 V2.500 M8 4 V5.500 M8 7 V12" stroke="#5f5f5f" stroke-width="1.900"/><path d="M3.500 8.500 L8 13 L12.500 8.500" fill="none" stroke="#5f5f5f" stroke-width="1.900"/></svg><span class="sb-item" style="top:129px;letter-spacing:0.37px">Downloads</span>
<svg class="sb-ic" style="top:160px" viewBox="0 0 16 16"><path d="M6.500 12 V3 H14 V11" fill="none" stroke="#5f5f5f" stroke-width="1.900"/><circle cx="4.300" cy="12" r="2.200" fill="none" stroke="#5f5f5f" stroke-width="1.800"/><circle cx="11.800" cy="11.500" r="2.200" fill="none" stroke="#5f5f5f" stroke-width="1.800"/></svg><span class="sb-item" style="top:159px;letter-spacing:0.2px">Music</span>
<svg class="sb-ic" style="top:190px" viewBox="0 0 16 16"><path d="M1.500 4.500 H4.500 L5.500 2.800 H10.500 L11.500 4.500 H14.500 V13.500 H1.500Z" fill="#5f5f5f"/><circle cx="8" cy="8.800" r="2.600" fill="#f2f1f0"/><circle cx="8" cy="8.800" r="1.200" fill="#5f5f5f"/></svg><span class="sb-item" style="top:189px;letter-spacing:0px">Pictures</span>
<svg class="sb-ic" style="top:220px" viewBox="0 0 16 16"><rect x="5" y="4.500" width="10" height="8" fill="#5f5f5f"/><path d="M1.500 5.500 L4.500 8.500 L1.500 11.500Z" fill="#5f5f5f"/></svg><span class="sb-item" style="top:219px;letter-spacing:0px">Videos</span>
<svg class="sb-ic" style="top:250px" viewBox="0 0 16 16"><path d="M1.800 5.200 Q8 2.600 14.200 5.200" fill="none" stroke="#5f5f5f" stroke-width="1.800"/><path d="M6 3.200 Q8 1.200 10 3.200" fill="none" stroke="#5f5f5f" stroke-width="1.300"/><path d="M2.600 6.500 Q2.600 13.200 4.600 14.200 H11.400 Q13.400 13.200 13.400 6.500" fill="none" stroke="#5f5f5f" stroke-width="1.700"/><path d="M5.800 7 V12.300 M8 7 V12.300 M10.200 7 V12.300" stroke="#5f5f5f" stroke-width="1.200"/></svg><span class="sb-item" style="top:249px;letter-spacing:-0.44px">Trash</span>
<svg class="sb-ic" style="top:280px" viewBox="0 0 16 16"><rect x="6.500" y="2.500" width="8" height="6" fill="none" stroke="#5f5f5f" stroke-width="1.800"/><rect x="1.500" y="6.500" width="6.500" height="5" fill="#f2f1f0" stroke="#5f5f5f" stroke-width="1.800"/><path d="M2 14 H8 M10.500 9 V12.500 H13.500" stroke="#5f5f5f" stroke-width="1.800" fill="none"/></svg><span class="sb-item" style="top:279px;letter-spacing:0.56px">Network</span>
<svg class="sb-ic" style="top:320px" viewBox="0 0 16 16"><rect x="2.300" y="1.800" width="11.400" height="12.400" rx="1.500" fill="none" stroke="#5f5f5f" stroke-width="1.900"/><circle cx="7.500" cy="7" r="2.800" fill="#5f5f5f"/><path d="M8 8 L11.500 12" stroke="#5f5f5f" stroke-width="1.800"/></svg><span class="sb-item" style="top:319px;letter-spacing:0.24px">Computer</span>
<svg class="sb-ic" style="top:350px" viewBox="0 0 16 16"><rect x="4.300" y="1.800" width="7.400" height="9" rx="1" fill="none" stroke="#5f5f5f" stroke-width="1.900"/><rect x="6.500" y="4" width="3" height="1.500" fill="#5f5f5f"/><path d="M8 11 V14 M2.500 14.300 H13.500" stroke="#5f5f5f" stroke-width="1.900"/></svg><span class="sb-item" style="top:349px;letter-spacing:0px">Connect to Server</span>
<div class="abs" style="left:0;top:308px;width:186px;height:1px;background:#d9d6d2"></div>
</div>
<div class="content">
<svg class="fi" style="left:65px;top:16px" width="46" height="38"><use href="#folder"/></svg>
<div class="fl" style="left:13px;top:57.0px"><div style="letter-spacing:-0.35px">CMakeFiles</div></div>
<svg class="fi" style="left:220px;top:16px" width="46" height="38"><use href="#folder"/></svg>
<div class="fl" style="left:168px;top:57.0px"><div style="letter-spacing:0.33px">lib</div></div>
<svg class="fi" style="left:380px;top:8px" width="36" height="46"><use href="#doc"/><use href="#doclines"/></svg>
<div class="fl" style="left:323px;top:57.0px"><div style="letter-spacing:-0.01px">CMakeCache.txt</div></div>
<svg class="fi" style="left:535px;top:8px" width="36" height="46"><use href="#doc"/><use href="#doclines"/></svg>
<div class="fl" style="left:478px;top:57.0px"><div style="letter-spacing:0.11px">cmake_install.</div><div style="letter-spacing:-0.09px">cmake</div></div>
<svg class="fi" style="left:70px;top:102px" width="36" height="46"><use href="#doc"/><g opacity=".55"><use href="#doclines"/></g><g transform="translate(4.500,9.500)"><use href="#py"/></g></svg>
<div class="fl" style="left:13px;top:150.5px"><div style="letter-spacing:0.2px">isp_auto.py</div></div>
<svg class="fi" style="left:223px;top:105px" width="41" height="43"><use href="#exe"/></svg>
<div class="fl" style="left:168px;top:150.5px"><div style="letter-spacing:0.2px">kpu</div></div>
<svg class="fi" style="left:380px;top:102px" width="36" height="46"><use href="#doc"/><g font-family="Liberation Sans,sans-serif" font-weight="bold" font-size="7.2" fill="#868686"><text x="5" y="11.300">1</text><text x="5" y="20.300">10</text><text x="5" y="29.300">101</text><text x="5" y="38.300">1010</text></g></svg>
<div class="fl" style="left:323px;top:150.5px"><div style="letter-spacing:0.4px">kpu.bin</div></div>
<svg class="fi" style="left:535px;top:102px" width="36" height="46"><use href="#doc"/><g font-family="Liberation Sans,sans-serif" font-weight="bold" font-size="7.2" fill="#868686"><text x="5" y="11.300">1</text><text x="5" y="20.300">10</text><text x="5" y="29.300">101</text><text x="5" y="38.300">1010</text></g></svg>
<div class="fl" style="left:478px;top:150.5px"><div style="letter-spacing:0.03px">maixpy-alpha_</div><div style="letter-spacing:0.2px">small.bin</div></div>
<svg class="fi" style="left:70px;top:196px" width="36" height="46"><use href="#doc"/><g font-family="Liberation Sans,sans-serif" font-weight="bold" font-size="7.2" fill="#868686"><text x="5" y="11.300">1</text><text x="5" y="20.300">10</text><text x="5" y="29.300">101</text><text x="5" y="38.300">1010</text></g></svg>
<div class="fl" style="left:13px;top:245.0px"><div style="letter-spacing:0.03px">maixpy_omv_alpha.</div><div style="letter-spacing:0.18px">bin</div></div>
<svg class="fi" style="left:225px;top:196px" width="36" height="46"><use href="#doc"/><use href="#doclines"/></svg>
<div class="fl" style="left:168px;top:245.0px"><div style="letter-spacing:0.32px">Makefile</div></div>
<svg class="fi" style="left:378px;top:199px" width="41" height="43"><use href="#exe"/></svg>
<div class="fl" style="left:323px;top:245.0px"><div style="letter-spacing:0.16px">uart</div></div>
<svg class="fi" style="left:535px;top:196px" width="36" height="46"><use href="#doc"/><g font-family="Liberation Sans,sans-serif" font-weight="bold" font-size="7.2" fill="#868686"><text x="5" y="11.300">1</text><text x="5" y="20.300">10</text><text x="5" y="29.300">101</text><text x="5" y="38.300">1010</text></g></svg>
<div class="fl" style="left:478px;top:245.0px"><div style="letter-spacing:0.24px">uart.bin</div></div>
</div>
</div>

<div id="term">
 <div class="tbar"></div>
 <svg class="abs" style="left:6px;top:5px" width="60" height="19" viewBox="0 0 60 19">
 <defs><linearGradient id="wc" x1="0" y1="0" x2="0" y2="1"><stop offset="0" stop-color="#f0774a"/><stop offset="1" stop-color="#d9481c"/></linearGradient><linearGradient id="wg2" x1="0" y1="0" x2="0" y2="1"><stop offset="0" stop-color="#85827a"/><stop offset="1" stop-color="#5e5c55"/></linearGradient></defs>
 <circle cx="9.400" cy="9.500" r="7.600" fill="url(#wc)" stroke="#7a2e14" stroke-width=".9"/><path d="M6.700 6.800 L12.100 12.200 M12.100 6.800 L6.700 12.200" stroke="#4a1a0a" stroke-width="1.400"/>
 <circle cx="28.400" cy="9.500" r="7.600" fill="url(#wg2)" stroke="#33322e" stroke-width=".9"/><path d="M24.900 9.700 H31.900" stroke="#3a3935" stroke-width="1.400"/>
 <circle cx="47.300" cy="9.500" r="7.600" fill="url(#wg2)" stroke="#33322e" stroke-width=".9"/><rect x="44.300" y="6.500" width="6" height="6" fill="none" stroke="#3a3935" stroke-width="1.200"/>
 </svg>
 <div class="ttl">ubuntu@ubuntu-desktop-work: ~/Downloads/kendryte-standalone-sdk/build</div>
 <pre><span class="g">ubuntu@ubuntu-desktop-work</span>:<span class="b">~/Downloads/kendryte-standalone-sdk/build</span>$ cmake .. -
DPROJ=kpu -DTOOLCHAIN=/opt/kendryte-toolchain/bin<span class="cur"></span></pre>
 <div class="sb"></div>
</div>
</body>
</html>
